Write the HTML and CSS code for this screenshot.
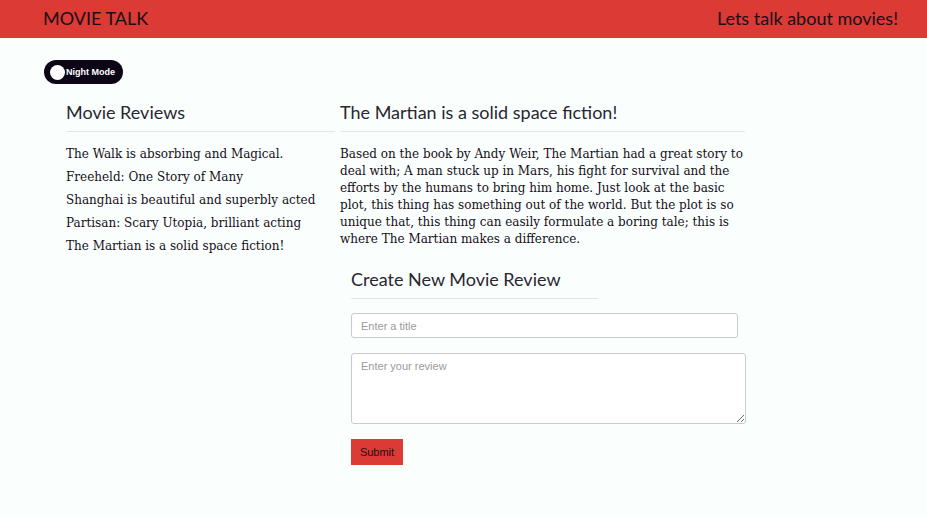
FILE: index.html
```html
<!DOCTYPE html>
<html>
<head>
<meta charset="utf-8">
<link rel="stylesheet" href="styles.css">
</head>
<body>
<header class="topbar">
  <div class="brand">MOVIE TALK</div>
  <div class="tagline">Lets talk about movies!</div>
</header>
<div class="toggle-row">
  <div class="toggle"><span class="knob"></span><span class="toggle-label">Night Mode</span></div>
</div>
<main class="content">
  <section class="col-left">
    <h2 class="heading">Movie Reviews</h2>
    <ul class="review-list">
      <li>The Walk is absorbing and Magical.</li>
      <li>Freeheld: One Story of Many</li>
      <li>Shanghai is beautiful and superbly acted</li>
      <li>Partisan: Scary Utopia, brilliant acting</li>
      <li>The Martian is a solid space fiction!</li>
    </ul>
  </section>
  <section class="col-right">
    <h2 class="heading">The Martian is a solid space fiction!</h2>
    <p class="review-body">Based on the book by Andy Weir, The Martian had a great story to deal with; A man stuck up in Mars, his fight for survival and the efforts by the humans to bring him home. Just look at the basic plot, this thing has something out of the world. But the plot is so unique that, this thing can easily formulate a boring tale; this is where The Martian makes a difference.</p>
    <form class="review-form">
      <h2 class="heading form-heading">Create New Movie Review</h2>
      <input class="field title-field" type="text" placeholder="Enter a title">
      <textarea class="field review-field" placeholder="Enter your review"></textarea>
      <button class="submit" type="button">Submit</button>
    </form>
  </section>
</main>
</body>
</html>
```
FILE: styles.css
```css
html, body {
  margin: 0;
  padding: 0;
  background: #fafffe;
}
body {
  font-family: "DejaVu Serif", serif;
  color: #160e18;
}
.topbar {
  height: 38px;
  background: #db3a35;
  display: flex;
  align-items: center;
  justify-content: space-between;
  padding: 0 29px 2px 43px;
  box-sizing: border-box;
  font-family: Lato, sans-serif;
  color: #1a0e18;
}
.brand {
  font-size: 18px;
}
.tagline {
  font-size: 18px;
}
.toggle-row {
  padding: 22px 0 0 44px;
}
.toggle {
  width: 79px;
  height: 24px;
  border-radius: 12px;
  background: #0b0515;
  display: flex;
  align-items: center;
  box-sizing: border-box;
  padding-left: 6px;
}
.knob {
  width: 15px;
  height: 15px;
  border-radius: 50%;
  background: #fff;
  flex: none;
}
.toggle-label {
  font-family: "Liberation Sans", Arial, sans-serif;
  font-weight: 700;
  font-size: 9px;
  color: #fff;
  margin-left: 1px;
}
.content {
  display: flex;
  padding: 16px 0 0 66px;
  gap: 5px;
}
.col-left {
  width: 269px;
}
.col-right {
  width: 405px;
}
.heading {
  font-family: Lato, sans-serif;
  font-weight: 400;
  font-size: 18px;
  color: #2a2630;
  margin: 0;
  padding-bottom: 7px;
  border-bottom: 1px solid #e3e6e6;
  line-height: 24px;
}
.review-list {
  list-style: none;
  margin: 11px 0 0;
  padding: 0;
}
.review-list li {
  font-size: 12px;
  line-height: 23px;
}
.review-body {
  font-size: 12px;
  line-height: 17px;
  margin: 14px 0 0;
}
.review-form {
  padding: 19px 0 0 11px;
  display: flex;
  flex-direction: column;
  align-items: flex-start;
}
.form-heading {
  width: 247px;
}
.field {
  box-sizing: border-box;
  border: 1px solid #c9cbcb;
  border-radius: 3px;
  background: #fff;
  font-family: "Liberation Sans", Arial, sans-serif;
  font-size: 11px;
  padding: 6px 9px;
  color: #333;
}
.field::placeholder {
  color: #9a9a9a;
}
.title-field {
  width: 387px;
  height: 25px;
  margin-top: 14px;
}
.review-field {
  width: 395px;
  height: 71px;
  margin-top: 15px;
  resize: both;
}
.submit {
  margin-top: 15px;
  width: 52px;
  height: 26px;
  background: #db3a35;
  border: none;
  color: #1a0e18;
  font-family: "Liberation Sans", Arial, sans-serif;
  font-size: 11px;
  padding: 0;
}
```
